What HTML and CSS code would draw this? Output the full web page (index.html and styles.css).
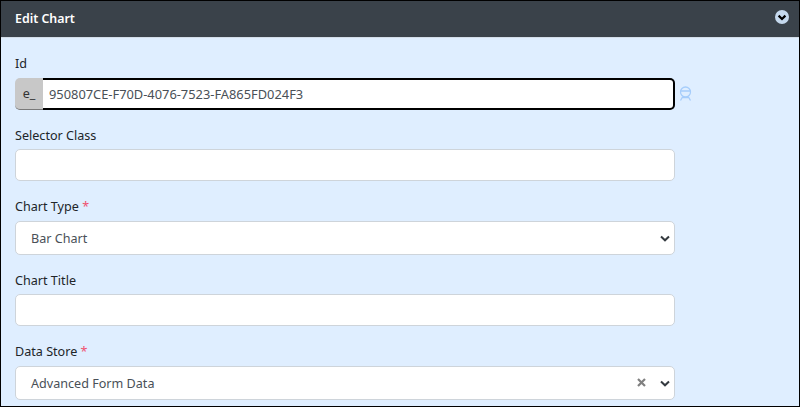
FILE: index.html
```html
<!DOCTYPE html>
<html lang="en">
<head>
<meta charset="utf-8">
<title>Edit Chart</title>
<link rel="stylesheet" href="styles.css">
</head>
<body>
<section class="panel">
  <header class="panel-head">
    <h1 class="panel-title">Edit Chart</h1>
    <svg class="collapse-icon" width="14" height="14" viewBox="0 0 14 14" aria-hidden="true">
      <circle cx="7" cy="7" r="7" fill="#c5d9ee"/>
      <path d="M3.6 5.600 7 9l3.400-3.400" fill="none" stroke="#000" stroke-width="2.200"/>
    </svg>
  </header>
  <form class="panel-body">
    <div class="field">
      <label class="label">Id</label>
      <div class="id-row">
        <div class="input-group">
          <span class="prefix">e_</span>
          <input class="control control-focus" type="text" value="950807CE-F70D-4076-7523-FA865FD024F3">
        </div>
        <svg class="spy-icon" width="13" height="15" viewBox="0 0 13 15" aria-hidden="true">
          <circle cx="6.500" cy="6" r="5" fill="none" stroke="#a6cdfb" stroke-width="1.300"/>
          <path d="M1 5h11M3 11.500h7M3.800 10.500 1.500 14.500M9.200 10.500l2.300 4" fill="none" stroke="#a6cdfb" stroke-width="1.300"/>
        </svg>
      </div>
    </div>
    <div class="field">
      <label class="label">Selector Class</label>
      <input class="control" type="text">
    </div>
    <div class="field">
      <label class="label">Chart Type <span class="req">*</span></label>
      <div class="select">
        <span class="select-value">Bar Chart</span>
        <svg class="chevron" width="10" height="7" viewBox="0 0 10 7" aria-hidden="true"><path d="M1 1.500 5 5.300 9 1.500" fill="none" stroke="#343a40" stroke-width="2"/></svg>
      </div>
    </div>
    <div class="field">
      <label class="label">Chart Title</label>
      <input class="control" type="text">
    </div>
    <div class="field">
      <label class="label">Data Store <span class="req">*</span></label>
      <div class="select">
        <span class="select-value">Advanced Form Data</span>
        <svg class="clear" width="9" height="9" viewBox="0 0 9 9" aria-hidden="true"><path d="M1 1l7 7M8 1 1 8" fill="none" stroke="#808080" stroke-width="2.200"/></svg>
        <svg class="chevron" width="10" height="7" viewBox="0 0 10 7" aria-hidden="true"><path d="M1 1.500 5 5.300 9 1.500" fill="none" stroke="#343a40" stroke-width="2"/></svg>
      </div>
    </div>
  </form>
</section>
</body>
</html>
```
FILE: styles.css
```css
* { box-sizing: border-box; }
html, body { margin: 0; height: 100%; }
body {
  font-family: "Noto Sans", "Open Sans", sans-serif;
  font-size: 12.6px;
  color: #212529;
  background: #fff;
}
.panel {
  width: 800px;
  height: 407px;
  border: 1px solid #000;
  background: #dfeeff;
  overflow: hidden;
}
.panel-head {
  height: 37px;
  background: #3a424a;
  border-bottom: 1px solid #d3dde8;
  display: flex;
  align-items: center;
  justify-content: space-between;
  padding: 0 10px 1px 14px;
}
.panel-title {
  margin: 0;
  font-size: 12.4px;
  font-weight: 600;
  color: #fff;
}
.collapse-icon { margin-bottom: 3px; }
.panel-body {
  padding: 17.3px 14px 0;
  display: flex;
  flex-direction: column;
  gap: 17px;
}
.field { display: flex; flex-direction: column; }
.label { line-height: 18px; margin-bottom: 4.5px; }
.req { color: #f0506e; }
.id-row { display: flex; align-items: center; gap: 4px; }
.input-group { display: flex; width: 660px; }
.prefix {
  width: 28px;
  height: 32px;
  background: #c8c8c8;
  border-radius: 5px 0 0 5px;
  border-bottom: 1px solid #7a7a7a;
  display: flex;
  align-items: center;
  justify-content: center;
  color: #333;
}
.control {
  display: block;
  width: 660px;
  height: 32px;
  font: inherit;
  color: #495057;
  background: #fff;
  border: 1px solid #ced4da;
  border-radius: 5px;
  padding: 0 5px;
  outline: 0;
}
.control-focus {
  flex: 1;
  width: auto;
  font-size: 12.85px;
  border: 2px solid #000;
  border-radius: 0 5px 5px 0;
  border-left: 0;
  padding-left: 6px;
}
.spy-icon { display: block; }
.select {
  width: 660px;
  height: 34px;
  background: #fff;
  border: 1px solid #ced4da;
  border-radius: 5px;
  display: flex;
  align-items: center;
  padding: 0 4px 0 15px;
  color: #495057;
}
.select-value { flex: 1; padding-top: 2px; }
.clear { margin-right: 14px; }
.chevron { display: block; margin-top: 1px; }
```
